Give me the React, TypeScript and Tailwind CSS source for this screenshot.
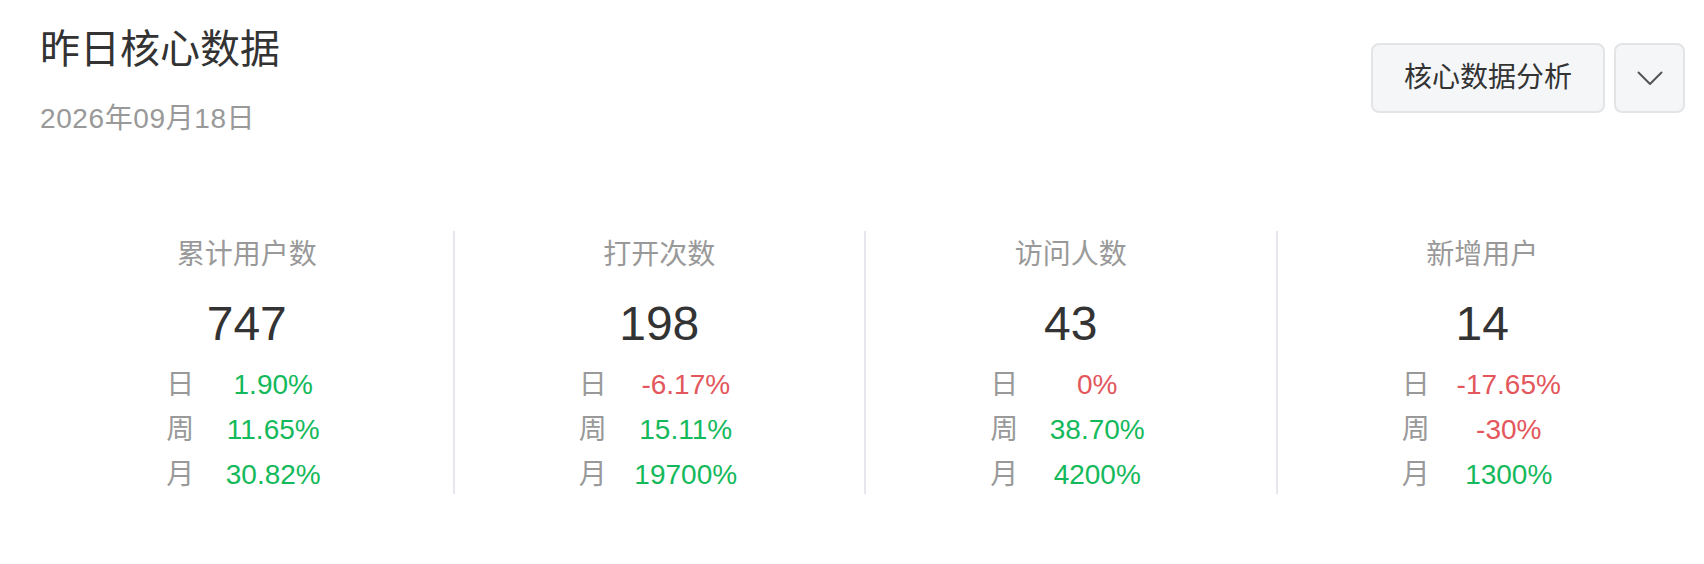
import React from 'react'

type Trend = { label: string; value: string; up: boolean }

const STATS: { title: string; total: string; trends: Trend[] }[] = [
  {
    title: '累计用户数',
    total: '747',
    trends: [
      { label: '日', value: '1.90%', up: true },
      { label: '周', value: '11.65%', up: true },
      { label: '月', value: '30.82%', up: true },
    ],
  },
  {
    title: '打开次数',
    total: '198',
    trends: [
      { label: '日', value: '-6.17%', up: false },
      { label: '周', value: '15.11%', up: true },
      { label: '月', value: '19700%', up: true },
    ],
  },
  {
    title: '访问人数',
    total: '43',
    trends: [
      { label: '日', value: '0%', up: false },
      { label: '周', value: '38.70%', up: true },
      { label: '月', value: '4200%', up: true },
    ],
  },
  {
    title: '新增用户',
    total: '14',
    trends: [
      { label: '日', value: '-17.65%', up: false },
      { label: '周', value: '-30%', up: false },
      { label: '月', value: '1300%', up: true },
    ],
  },
]

function ChevronDown() {
  return (
    <svg width="26" height="15" viewBox="0 0 26 15" fill="none" stroke="#555" strokeWidth="2" strokeLinecap="round" strokeLinejoin="round" aria-hidden="true">
      <path d="M1.5 1.5 13 13 24.5 1.5" />
    </svg>
  )
}

export default function App() {
  return (
    <div className="w-[1704px] h-[564px] bg-white font-['Liberation_Sans','Noto_Sans_CJK_SC',sans-serif] overflow-hidden">
      {/* Header */}
      <div className="flex items-start justify-between pl-[40px] pr-[19px]">
        <div className="pt-[29px]">
          <h1 className="text-[40px] leading-[40px] text-[#333]">昨日核心数据</h1>
          <p className="mt-[33px] text-[28px] leading-[34px] tracking-[0.6px] text-[#999]">2026年09月18日</p>
        </div>
        <div className="flex gap-[9px] pt-[43px]">
          <button className="h-[70px] w-[234px] rounded-[8px] border-2 border-[#e3e4e6] bg-[#f5f6f8] text-[28px] text-[#333]">
            核心数据分析
          </button>
          <button className="h-[70px] w-[71px] rounded-[8px] border-2 border-[#e3e4e6] bg-[#f5f6f8] flex items-center justify-center">
            <ChevronDown />
          </button>
        </div>
      </div>

      {/* Stats */}
      <div className="mt-[95px] ml-[41px] mr-[17px] grid grid-cols-4">
        {STATS.map((s, i) => (
          <div
            key={s.title}
            className={`flex flex-col items-center pt-[4px] pb-[2px] ${i > 0 ? 'border-l-2 border-[#e6e6ec]' : ''}`}
          >
            <div className="text-[28px] leading-[40px] text-[#999]">{s.title}</div>
            <div className="mt-[25px] text-[48px] leading-[48px] text-[#333]">{s.total}</div>
            <div className="mt-[20px] flex flex-col gap-[11px]">
              {s.trends.map(t => (
                <div key={t.label} className="flex h-[34px] items-center text-[28px] leading-[34px]">
                  <span className="w-[40px] text-center text-[#999]">{t.label}</span>
                  <span className={`ml-[13px] w-[120px] text-center ${t.up ? 'text-[#14b95b]' : 'text-[#e3575c]'}`}>
                    {t.value}
                  </span>
                </div>
              ))}
            </div>
          </div>
        ))}
      </div>
    </div>
  )
}
